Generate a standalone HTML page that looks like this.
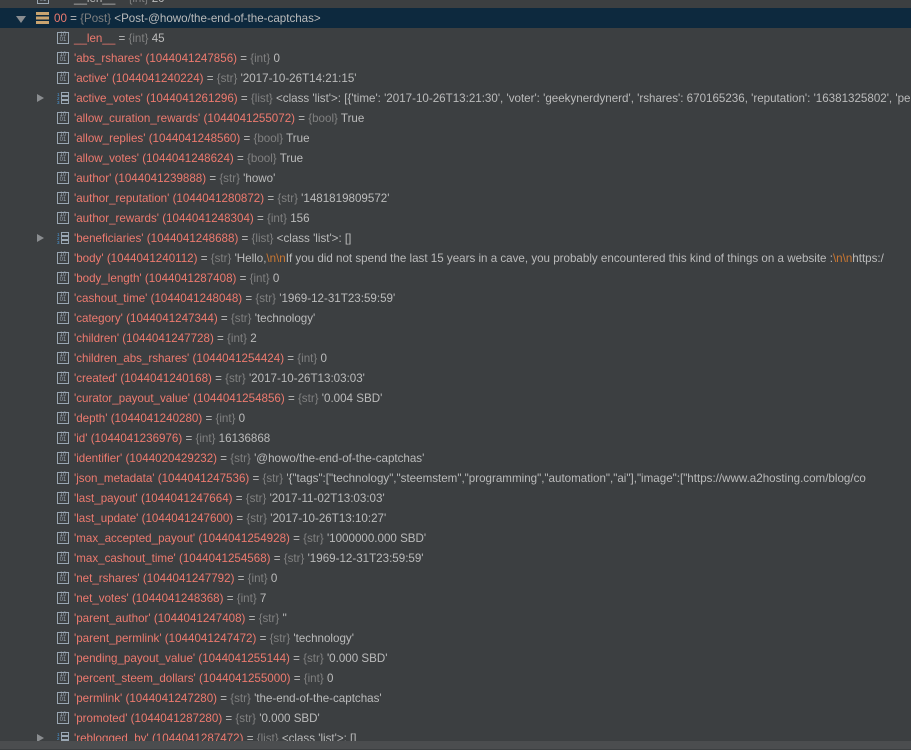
<!DOCTYPE html><html><head><meta charset="utf-8"><style>
body{margin:0;width:911px;height:749px;background:#3c3f41;overflow:hidden;position:relative;font-family:"Liberation Sans",sans-serif;font-size:11.6px;color:#bbbbbb}
.r{position:absolute;left:0;height:20px;line-height:22px;white-space:nowrap;width:911px}
.n{color:#ed7a6f}.t{color:#808080}.o{color:#cc7832}
.ic{position:absolute;top:4px;width:10px;height:10px;border:1px solid #9aa7b3;background:#3c3f41;font-size:6px;line-height:5px;color:#9aa7b3;text-align:center;box-sizing:content-box}
.tx{position:absolute;left:74px}
.ar{position:absolute;left:37px;top:6px;width:0;height:0;border-top:4px solid transparent;border-bottom:4px solid transparent;border-left:7px solid #8a8d90}
.li{position:absolute;left:57px;top:4px;width:12px;height:12px}
</style></head><body>
<div class="r" style="top:-12px"><span class="ic" style="left:37px">10<br>01</span><span class="tx">__len__ = <span class="t">{int}</span> 20</span></div>
<div class="r" style="top:8px;background:#0d293e"><span style="position:absolute;left:16px;top:8px;border-left:5px solid transparent;border-right:5px solid transparent;border-top:7px solid #8a8d90"></span><svg style="position:absolute;left:36px;top:4px" width="13" height="12"><rect x="0" y="0" width="13" height="3" fill="#c9a470"/><rect x="0" y="4.5" width="13" height="3" fill="#c9a470"/><rect x="0" y="9" width="13" height="3" fill="#c9a470"/></svg><span style="position:absolute;left:54px"><span class="n">00</span> = <span class="t">{Post}</span> &lt;Post-@howo/the-end-of-the-captchas&gt;</span></div>
<div id="rows"></div>
<div style="position:absolute;left:0;top:741px;width:911px;height:8px;background:#4b4d4f"></div>
<script>
var R=[
['__len__','',' = ','int','45',0,1],
["'abs_rshares'","1044041247856",'','int','0'],
["'active'","1044041240224",'','str',"'2017-10-26T14:21:15'"],
["'active_votes'","1044041261296",'','list',"&lt;class 'list'&gt;: [{'time': '2017-10-26T13:21:30', 'voter': 'geekynerdynerd', 'rshares': 670165236, 'reputation': '16381325802', 'pe",1],
["'allow_curation_rewards'","1044041255072",'','bool','True'],
["'allow_replies'","1044041248560",'','bool','True'],
["'allow_votes'","1044041248624",'','bool','True'],
["'author'","1044041239888",'','str',"'howo'"],
["'author_reputation'","1044041280872",'','str',"'1481819809572'"],
["'author_rewards'","1044041248304",'','int','156'],
["'beneficiaries'","1044041248688",'','list',"&lt;class 'list'&gt;: []",1],
["'body'","1044041240112",'','str',"'Hello,<span class=o>\\n\\n</span>If you did not spend the last 15 years in a cave, you probably encountered this kind of things on a website :<span class=o>\\n\\n</span>https:/"],
["'body_length'","1044041287408",'','int','0'],
["'cashout_time'","1044041248048",'','str',"'1969-12-31T23:59:59'"],
["'category'","1044041247344",'','str',"'technology'"],
["'children'","1044041247728",'','int','2'],
["'children_abs_rshares'","1044041254424",'','int','0'],
["'created'","1044041240168",'','str',"'2017-10-26T13:03:03'"],
["'curator_payout_value'","1044041254856",'','str',"'0.004 SBD'"],
["'depth'","1044041240280",'','int','0'],
["'id'","1044041236976",'','int','16136868'],
["'identifier'","1044020429232",'','str',"'@howo/the-end-of-the-captchas'"],
["'json_metadata'","1044041247536",'','str',"'{\"tags\":[\"technology\",\"steemstem\",\"programming\",\"automation\",\"ai\"],\"image\":[\"https://www.a2hosting.com/blog/co"],
["'last_payout'","1044041247664",'','str',"'2017-11-02T13:03:03'"],
["'last_update'","1044041247600",'','str',"'2017-10-26T13:10:27'"],
["'max_accepted_payout'","1044041254928",'','str',"'1000000.000 SBD'"],
["'max_cashout_time'","1044041254568",'','str',"'1969-12-31T23:59:59'"],
["'net_rshares'","1044041247792",'','int','0'],
["'net_votes'","1044041248368",'','int','7'],
["'parent_author'","1044041247408",'','str',"''"],
["'parent_permlink'","1044041247472",'','str',"'technology'"],
["'pending_payout_value'","1044041255144",'','str',"'0.000 SBD'"],
["'percent_steem_dollars'","1044041255000",'','int','0'],
["'permlink'","1044041247280",'','str',"'the-end-of-the-captchas'"],
["'promoted'","1044041287280",'','str',"'0.000 SBD'"],
["'reblogged_by'","1044041287472",'','list',"&lt;class 'list'&gt;: []",1]
];
var h='';
R.forEach(function(a,i){
 var top=28+i*20;
 var icon;
 if(a[3]=='list') icon='<span class="ar"></span><svg class="li" viewBox="0 0 12 12"><text x="0" y="4" font-size="4.5" fill="#4a9de0" font-family="Liberation Sans">1</text><text x="0" y="8" font-size="4.5" fill="#4a9de0" font-family="Liberation Sans">2</text><text x="0" y="12" font-size="4.5" fill="#4a9de0" font-family="Liberation Sans">3</text><rect x="4.5" y="0.5" width="7" height="3" fill="none" stroke="#9aa7b3"/><rect x="4.5" y="4.5" width="7" height="3" fill="none" stroke="#9aa7b3"/><rect x="4.5" y="8.5" width="7" height="3" fill="none" stroke="#9aa7b3"/></svg>';
 else icon='<span class="ic" style="left:57px">10<br>01</span>';
 var name='<span class="n">'+a[0]+'</span>'+(a[1]?' <span class="n">('+a[1]+')</span>':'');
 h+='<div class="r" style="top:'+top+'px">'+icon+'<span class="tx">'+name+' = <span class="t">{'+a[3]+'}</span> '+a[4]+'</span></div>';
});
document.getElementById('rows').innerHTML=h;
</script>
</body></html>
